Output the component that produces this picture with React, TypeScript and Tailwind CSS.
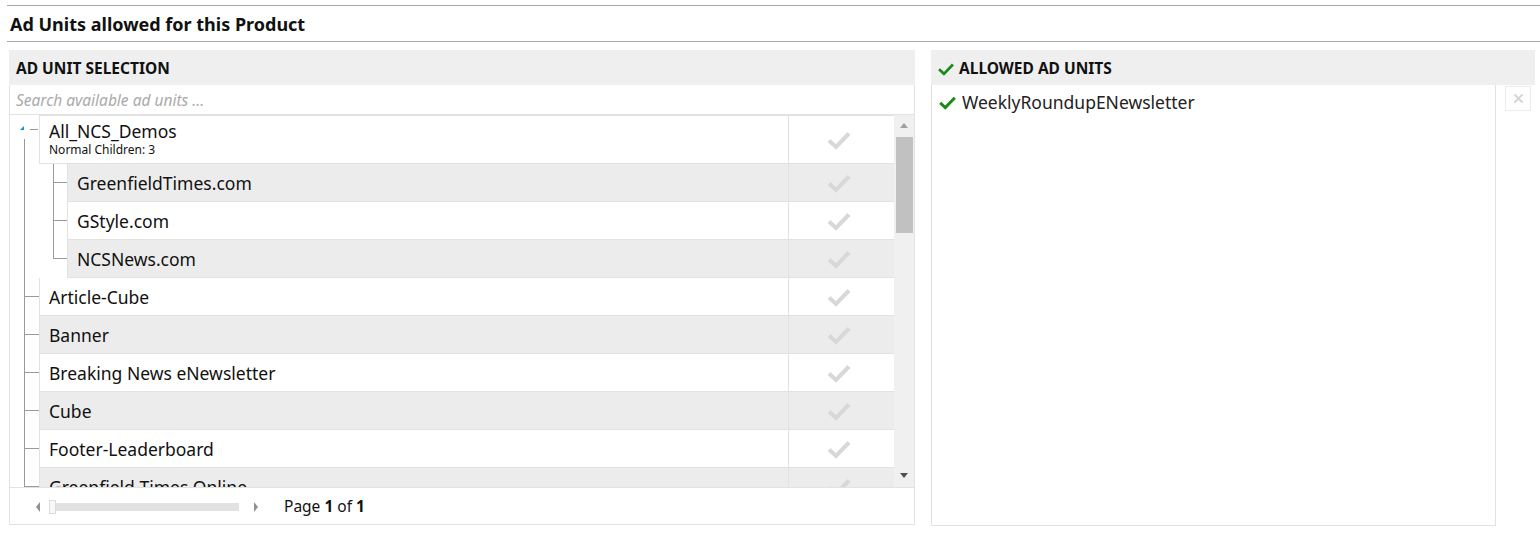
import React from 'react'

type Row = { name: string; sub?: string; depth: 0 | 1; last?: boolean; expander?: boolean }

const rows: Row[] = [
  { name: 'All_NCS_Demos', sub: 'Normal Children: 3', depth: 0, expander: true },
  { name: 'GreenfieldTimes.com', depth: 1 },
  { name: 'GStyle.com', depth: 1 },
  { name: 'NCSNews.com', depth: 1, last: true },
  { name: 'Article-Cube', depth: 0 },
  { name: 'Banner', depth: 0 },
  { name: 'Breaking News eNewsletter', depth: 0 },
  { name: 'Cube', depth: 0 },
  { name: 'Footer-Leaderboard', depth: 0 },
  { name: 'Greenfield Times Online', depth: 0 },
]

const CheckMark = ({ className }: { className?: string }) => (
  <svg viewBox="0 0 26 20" className={className} fill="none">
    <path d="M3 10.5 L10 17 L23 3.5" stroke="currentColor" strokeWidth="4" />
  </svg>
)

const TreeRow = ({ row, index }: { row: Row; index: number }) => {
  const shaded = index % 2 === 1
  const bg = shaded ? 'bg-[#ececec]' : 'bg-white'
  const tall = !!row.sub

  return (
    <div className={`flex shrink-0 ${tall ? 'h-[49px]' : 'h-[38px]'}`}>
      {/* top level connector */}
      <div className="relative w-[29px] shrink-0">
        {row.expander ? (
          <>
            <div className="absolute left-[10px] top-[11px] h-0 w-0 border-b-[4px] border-l-[4px] border-b-[#1b8fd8] border-l-transparent" />
            <div className="absolute left-[20px] top-[14px] h-px w-[8px] bg-[#9a9a9a]" />
            <div className="absolute left-[14px] top-[24px] bottom-0 w-px bg-[#9a9a9a]" />
          </>
        ) : (
          <>
            <div className="absolute left-[14px] top-0 bottom-0 w-px bg-[#9a9a9a]" />
            {row.depth === 0 && <div className="absolute left-[14px] top-[18px] h-px w-[15px] bg-[#9a9a9a]" />}
          </>
        )}
      </div>
      {row.depth === 1 && (
        <div className="relative w-[28px] shrink-0 bg-white">
          <div className={`absolute left-[14px] top-0 w-px bg-[#9a9a9a] ${row.last ? 'h-[19px]' : 'bottom-0'}`} />
          <div className="absolute left-[14px] top-[18px] h-px w-[14px] bg-[#9a9a9a]" />
        </div>
      )}
      <div className={`flex flex-1 flex-col justify-center border-b border-l border-[#e2e2e2] pl-[9px] ${bg} ${tall ? 'border-t pb-[2px]' : ''}`}>
        <span className="text-[17.5px] leading-[22px] text-[#111]">{row.name}</span>
        {row.sub && <span className="text-[12px] leading-[15px] text-[#111]">{row.sub}</span>}
      </div>
      <div className={`flex w-[106px] shrink-0 items-center justify-center border-b border-l border-[#e2e2e2] pr-[6px] ${bg} ${tall ? 'border-t' : ''}`}>
        <CheckMark className="h-[20px] w-[26px] text-[#d8d8d8]" />
      </div>
    </div>
  )
}

export default function App() {
  return (
    <div className="h-[548px] w-[1540px] bg-white pt-[5px] font-['Noto_Sans',sans-serif] text-[#111]">
      <header className="ml-[7px] flex h-[37px] items-center border-y border-[#a8a8a8] pl-[3px]">
        <h2 className="pt-px text-[18px] font-bold">Ad Units allowed for this Product</h2>
      </header>

      <div className="mt-[8px] flex gap-[16px] pl-[9px]">
        <section className="flex w-[906px] flex-col">
          <div className="flex h-[35px] items-center bg-[#efefef] pl-[7px] pt-[3px]">
            <h4 className="text-[15.5px] font-bold">AD UNIT SELECTION</h4>
          </div>
          <div className="flex flex-col border border-t-0 border-[#e2e2e2]">
            <div className="flex h-[30px] items-center border-b border-[#e2e2e2] pl-[6px] pt-[3px]">
              <span className="text-[15.5px] italic text-[#aaaaaa]">Search available ad units ...</span>
            </div>
            <div className="flex h-[372px] overflow-hidden">
              <div className="flex flex-1 flex-col overflow-hidden">
                {rows.map((row, i) => (
                  <TreeRow key={row.name} row={row} index={i} />
                ))}
              </div>
              <div className="flex w-[20px] shrink-0 flex-col items-center bg-[#f0f0f0]">
                <div className="mt-[8px] h-0 w-0 border-x-[4px] border-b-[5px] border-x-transparent border-b-[#a0a0a0]" />
                <div className="mt-[9px] h-[96px] w-[17px] bg-[#c1c1c1]" />
                <div className="mt-auto mb-[9px] h-0 w-0 border-x-[4px] border-t-[5px] border-x-transparent border-t-[#505050]" />
              </div>
            </div>
            <div className="flex h-[37px] items-center border-t border-[#e2e2e2] pl-[26px] pt-[2px]">
              <div className="h-0 w-0 border-y-[5px] border-r-[4px] border-y-transparent border-r-[#909090]" />
              <div className="relative ml-[9px] h-[8px] w-[190px] bg-[#e2e2e2]">
                <div className="absolute left-0 top-[-3px] h-[14px] w-[7px] border border-[#dcdcdc] bg-[#f8f8f8]" />
              </div>
              <div className="ml-[15px] h-0 w-0 border-y-[5px] border-l-[4px] border-y-transparent border-l-[#909090]" />
              <span className="ml-[26px] text-[15.5px]">
                Page <b>1</b> of <b>1</b>
              </span>
            </div>
          </div>
        </section>

        <section className="flex w-[604px] flex-col">
          <div className="flex h-[35px] items-center gap-[4px] bg-[#efefef] pl-[6px] pt-[3px]">
            <CheckMark className="h-[14px] w-[18px] text-[#1a8a1a]" />
            <h4 className="text-[15.5px] font-bold">ALLOWED AD UNITS</h4>
          </div>
          <div className="flex">
            <div className="h-[441px] w-[565px] border border-t-0 border-[#e2e2e2] px-[6px] pt-[4px]">
              <div className="flex items-center gap-[5px]">
                <CheckMark className="h-[15px] w-[19px] text-[#1a8a1a]" />
                <span className="text-[17.5px] text-[#222]">WeeklyRoundupENewsletter</span>
              </div>
            </div>
            <div className="ml-[9px] mt-px flex h-[25px] w-[26px] items-center justify-center border border-[#ececec] text-[#d4d4d4]">
              <svg viewBox="0 0 12 12" className="h-[11px] w-[11px]">
                <path d="M1.5 1.5 L10.5 10.5 M10.5 1.5 L1.5 10.5" stroke="currentColor" strokeWidth="2.2" />
              </svg>
            </div>
          </div>
        </section>
      </div>
    </div>
  )
}
